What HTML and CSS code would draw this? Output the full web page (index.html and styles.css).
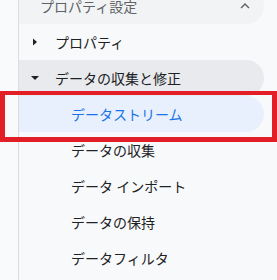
FILE: index.html
```html
<!DOCTYPE html>
<html lang="ja">
<head>
  <meta charset="UTF-8" />
  <title>プロパティ設定</title>
  <link rel="stylesheet" href="styles.css">
</head>
<body>
  <div class="layout">
    <div class="rail"></div>

    <nav class="nav">
      <div class="row section">
        <span>プロパティ設定</span>
        <svg class="chevron" width="18" height="18" viewBox="0 0 24 24">
          <path d="M12 8l-6 6 1.41 1.41L12 10.83l4.59 4.58L18 14z" fill="#5f6368"/>
        </svg>
      </div>

      <div class="row group">
        <svg class="caret" width="10" height="10" viewBox="0 0 10 10">
          <polygon points="3,1.5 7,5 3,8.5" fill="#202124"/>
        </svg>
        <span>プロパティ</span>
      </div>

      <div class="row group open">
        <svg class="caret" width="10" height="10" viewBox="0 0 10 10">
          <polygon points="1,3 9,3 5,7" fill="#202124"/>
        </svg>
        <span>データの収集と修正</span>
      </div>

      <div class="row item active">
        <span>データストリーム</span>
        <div class="highlight"></div>
      </div>
      <div class="row item"><span>データの収集</span></div>
      <div class="row item"><span>データ インポート</span></div>
      <div class="row item"><span>データの保持</span></div>
      <div class="row item"><span>データフィルタ</span></div>
    </nav>
  </div>
</body>
</html>
```

FILE: styles.css
```css
* { margin: 0; padding: 0; box-sizing: border-box; }

body {
  font-family: "Noto Sans CJK JP", "Noto Sans", sans-serif;
  font-size: 14px;
  background: #f8f9fa;
  color: #202124;
  overflow: hidden;
}

.layout {
  display: flex;
  min-height: 100vh;
}

.rail {
  width: 19px;
  background: #f9fafb;
  border-right: 1px solid #dadce0;
}

.nav {
  flex: 1;
  margin-top: -12px;
  padding-right: 13px;
}

.row {
  height: 36px;
  display: flex;
  align-items: center;
  border-radius: 0 18px 18px 0;
  white-space: nowrap;
  position: relative;
}

.section {
  background: #f1f3f4;
  color: #5f6368;
  padding-left: 21px;
  padding-right: 10px;
  justify-content: space-between;
}

.chevron {
  display: block;
}

.group {
  padding-left: 11px;
}

.group .caret {
  display: block;
  margin-right: 15px;
}

.open {
  background: #e8eaed;
}

.item {
  padding-left: 52px;
}

.active {
  background: #e8f0fe;
  color: #1a73e8;
}

.highlight {
  position: absolute;
  left: -19px;
  top: -5px;
  right: -13px;
  bottom: -10px;
  border: 5px solid #e21f26;
  border-top-width: 4px;
}
```
